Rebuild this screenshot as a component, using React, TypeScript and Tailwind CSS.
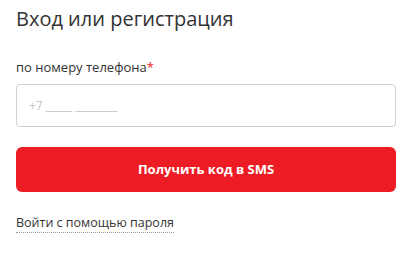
export default function App() {
    return (
        <div className="w-[412px] h-[259px] bg-white px-4 pt-[5px] font-['Open_Sans',sans-serif]">
            <h1 className="text-[20px] leading-[28px] text-[#333] font-normal">Вход или регистрация</h1>

            <div className="mt-[25px] text-[13px] leading-[18px] text-[#333]">
                по номеру телефона<span className="text-[#ed1c24]">*</span>
            </div>

            <div className="mt-[8px] h-[43px] w-[380px] rounded border border-[#cfcfcf] flex items-center px-[12px]">
                <span className="text-[12px] text-[#c4c4c4]">+7 _____ ________</span>
            </div>

            <button className="mt-[20px] h-[45px] w-[380px] rounded-md bg-[#ed1c24] text-white text-[13px] font-bold">
                Получить код в SMS
            </button>

            <div className="mt-[17px]">
                <span className="text-[12.5px] leading-[18px] text-[#333] border-b border-dotted border-[#999] pb-[1px]">
                    Войти с помощью пароля
                </span>
            </div>
        </div>
    )
}
